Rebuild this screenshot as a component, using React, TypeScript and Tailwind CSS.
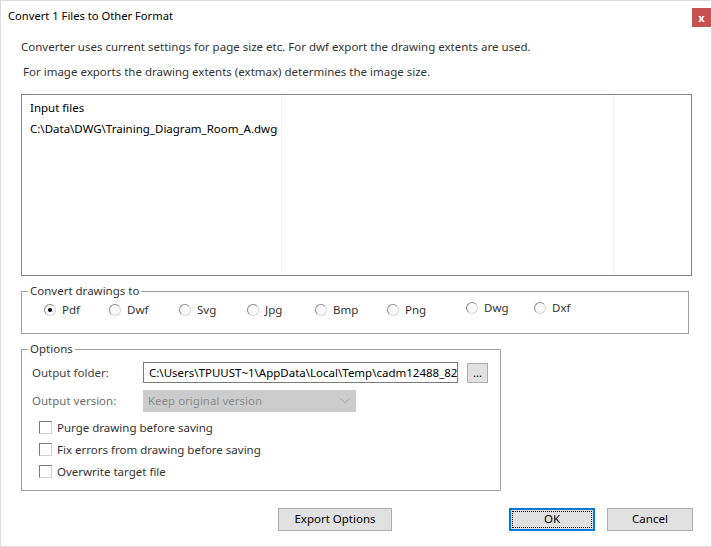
import React, { useState } from 'react';

const formats = [
  { label: 'Pdf', w: 'w-[65px]', lift: '' },
  { label: 'Dwf', w: 'w-[70px]', lift: '' },
  { label: 'Svg', w: 'w-[68px]', lift: '' },
  { label: 'Jpg', w: 'w-[68px]', lift: '' },
  { label: 'Bmp', w: 'w-[72px]', lift: '' },
  { label: 'Png', w: 'w-[79px]', lift: '' },
  { label: 'Dwg', w: 'w-[68px]', lift: 'mb-[2px]' },
  { label: 'Dxf', w: 'w-[60px]', lift: 'mb-[2px]' },
];

const checks = [
  'Purge drawing before saving',
  'Fix errors from drawing before saving',
  'Overwrite target file',
];

function Radio({ checked }: { checked: boolean }) {
  return (
    <span className="w-[12px] h-[12px] rounded-full border border-[#8a8a8a] border-r-[#d8d8d8] border-b-[#d8d8d8] bg-[#fafafa] flex items-center justify-center shrink-0">
      {checked && <span className="w-[4px] h-[4px] rounded-full bg-black" />}
    </span>
  );
}

function Button({ children, focused, w }: { children: React.ReactNode; focused?: boolean; w: string }) {
  return (
    <button
      className={
        focused
          ? `${w} h-[23px] bg-[#e1e1e1] border-2 border-[#0078d7] p-px text-black`
          : `${w} h-[23px] bg-[#e1e1e1] border border-[#adadad] pb-[2px] text-black`
      }
    >
      {focused ? (
        <span className="w-full h-full flex items-center justify-center pb-[1px] border border-dotted border-black">{children}</span>
      ) : (
        children
      )}
    </button>
  );
}

function App() {
  const [format, setFormat] = useState('Pdf');

  return (
    <div className="w-[712px] h-[547px] bg-white border border-[#dcdcdc] font-['Noto_Sans',sans-serif] text-[11.5px] leading-[16px] text-[#333] flex flex-col">
      {/* Title bar */}
      <div className="h-[32px] flex items-start justify-between">
        <span className="ml-[7px] mt-[7px] text-[11.2px] text-black">Convert 1 Files to Other Format</span>
        <button className="mt-[7px] w-[19px] h-[19px] bg-[#c75050] text-white text-[11px] font-bold leading-[17px]">x</button>
      </div>

      <div className="pl-[20px] flex flex-col">
        <p className="mt-[6px]">Converter uses current settings for page size etc. For dwf export the drawing extents are used.</p>
        <p className="mt-[9px] ml-[2px]">For image exports the drawing extents (extmax) determines the image size.</p>

        {/* Input files list */}
        <div className="mt-[14px] w-[671px] h-[182px] border border-[#828790] flex text-black">
          <div className="w-[260px] border-r border-[#eef3f8] pl-[8px] pt-[5px]">
            <div>Input files</div>
            <div className="mt-[5px] whitespace-nowrap">C:\Data\DWG\Training_Diagram_Room_A.dwg</div>
          </div>
          <div className="w-[332px] border-r border-[#eef3f8]" />
          <div className="flex-1" />
        </div>

        {/* Convert drawings to */}
        <fieldset className="mt-[7px] w-[668px] h-[51px] border border-[#a0a0a0] pl-[6px]">
          <legend className="px-[2px] text-[#333]">Convert drawings to</legend>
          <div className="flex items-end h-[19px] pl-[16px]">
            {formats.map(f => (
              <label key={f.label} className={`${f.w} ${f.lift} flex items-center gap-[6px] cursor-default`} onClick={() => setFormat(f.label)}>
                <Radio checked={format === f.label} />
                <span>{f.label}</span>
              </label>
            ))}
          </div>
        </fieldset>

        {/* Options */}
        <fieldset className="mt-[7px] w-[480px] h-[150px] border border-[#a0a0a0] pl-[6px]">
          <legend className="px-[2px] text-[#333]">Options</legend>
          <div className="flex items-center mt-[5px] pl-[4px]">
            <span className="w-[111px] text-[#444]">Output folder:</span>
            <div className="w-[315px] h-[21px] border border-[#7a7a7a] pl-[5px] flex items-center text-black overflow-hidden whitespace-nowrap">
              C:\Users\TPUUST~1\AppData\Local\Temp\cadm12488_82
            </div>
            <button className="ml-[9px] w-[21px] h-[20px] bg-[#e1e1e1] border border-[#adadad] text-black leading-[12px]">...</button>
          </div>
          <div className="flex items-center mt-[7px] pl-[4px]">
            <span className="w-[111px] text-[#6d6d6d]">Output version:</span>
            <div className="w-[213px] h-[22px] bg-[#cccccc] border border-[#cccccc] pl-[4px] pr-[5px] flex items-center justify-between text-[#8d8d8d]">
              <span>Keep original version</span>
              <svg width="10" height="6" viewBox="0 0 10 6" fill="none" stroke="#a8a8a8" strokeWidth="1">
                <path d="M0.5 0.5 L5 5 L9.5 0.5" />
              </svg>
            </div>
          </div>
          <div className="flex flex-col mt-[9px] pl-[11px] gap-[9px]">
            {checks.map(c => (
              <label key={c} className="flex items-center gap-[5px] h-[13px] cursor-default">
                <span className="w-[13px] h-[13px] border border-[#7a7a7a] border-r-[#d0d0d0] border-b-[#d0d0d0] bg-white shrink-0" />
                <span>{c}</span>
              </label>
            ))}
          </div>
        </fieldset>
      </div>

      {/* Buttons */}
      <div className="mt-[17px] pl-[277px] flex">
        <Button w="w-[114px]">Export Options</Button>
        <div className="ml-[117px]">
          <Button w="w-[86px]" focused>OK</Button>
        </div>
        <div className="ml-[12px]">
          <Button w="w-[86px]">Cancel</Button>
        </div>
      </div>
    </div>
  );
}

export default App;
